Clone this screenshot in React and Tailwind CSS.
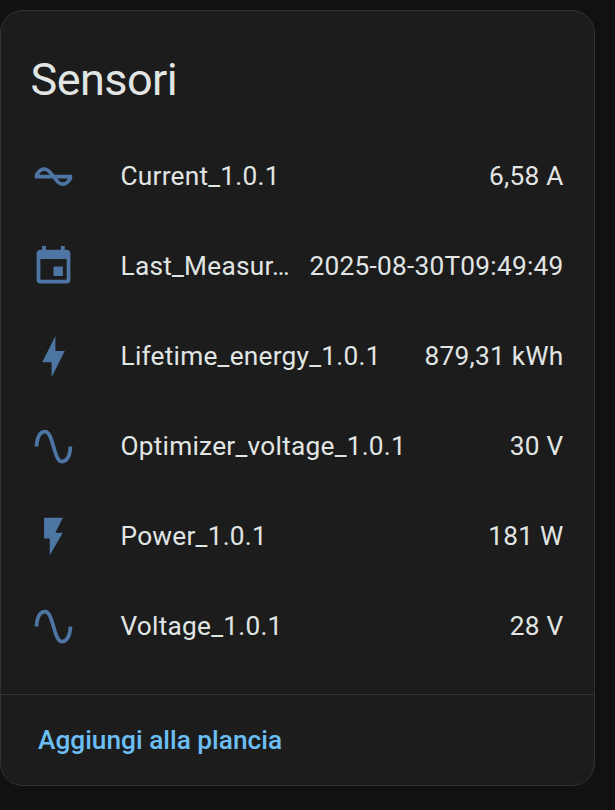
const icons = {
  current:
    "M12.43 11C12.28 10.84 10 7 7 7S2.32 10.18 2 11V13H11.57C11.72 13.16 14 17 17 17S21.68 13.82 22 13V11H12.43M7 9C8.17 9 9.18 9.85 10 11H4.31C4.78 10.17 5.54 9 7 9M17 15C15.83 15 14.82 14.16 14 13H19.69C19.22 13.83 18.46 15 17 15Z",
  calendar:
    "M19,19H5V8H19M16,1V3H8V1H6V3H5C3.89,3 3,3.89 3,5V19A2,2 0 0,0 5,21H19A2,2 0 0,0 21,19V5C21,3.89 20.1,3 19,3H18V1M17,12H12V17H17V12Z",
  bolt: "M11 15H6L13 1V9H18L11 23V15Z",
  sine: "M16.5,21C13.5,21 12.31,16.76 11.05,12.28C10.14,9.04 9,5 7.5,5C4.11,5 4,11.93 4,12H2C2,11.63 2.06,3 7.5,3C10.5,3 11.71,7.25 12.97,11.74C13.83,14.8 15,19 16.5,19C19.94,19 20.03,12.07 20.03,12H22.03C22.03,12.37 21.97,21 16.5,21Z",
  flash: "M7,2V13H10V22L17,10H13L17,2H7Z",
};

const sensors = [
  { icon: "current", name: "Current_1.0.1", value: "6,58 A" },
  { icon: "calendar", name: "Last_Measur…", value: "2025-08-30T09:49:49" },
  { icon: "bolt", name: "Lifetime_energy_1.0.1", value: "879,31 kWh" },
  { icon: "sine", name: "Optimizer_voltage_1.0.1", value: "30 V" },
  { icon: "flash", name: "Power_1.0.1", value: "181 W" },
  { icon: "sine", name: "Voltage_1.0.1", value: "28 V" },
];

const SensorRow = ({ icon, name, value }) => {
  return (
    <li className="flex h-[90px] items-center text-[26.25px] leading-[38px] tracking-[0.24px]">
      <svg viewBox="0 0 24 24" className="size-[45px] shrink-0 fill-[#4d76a4]">
        <path d={icons[icon]} />
      </svg>
      <span className="ml-[44.5px] whitespace-nowrap">{name}</span>
      <span className="ml-auto whitespace-nowrap">{value}</span>
    </li>
  );
};

const App = () => {
  return (
    <main className="h-screen overflow-hidden bg-[#111111] pt-[10px] font-['Roboto',sans-serif] text-[#e1e5e4]">
      <section className="flex h-[776px] w-[595px] flex-col rounded-[23px] border border-[#333333] bg-[#1c1c1c]">
        <h1 className="px-[29.5px] pt-[35px] text-[45px] leading-[68px] tracking-[-0.012em]">Sensori</h1>

        <ul className="mt-[17px] pr-[30.5px] pl-[30px]">
          {sensors.map((sensor) => (
            <SensorRow key={sensor.name} {...sensor} />
          ))}
        </ul>

        <footer className="mt-auto flex h-[91px] items-center border-t border-[#333333] px-[37px] pt-[2px]">
          <button className="text-[26.25px] font-medium text-[#6bbff5]">Aggiungi alla plancia</button>
        </footer>
      </section>
    </main>
  );
};

export default App;
